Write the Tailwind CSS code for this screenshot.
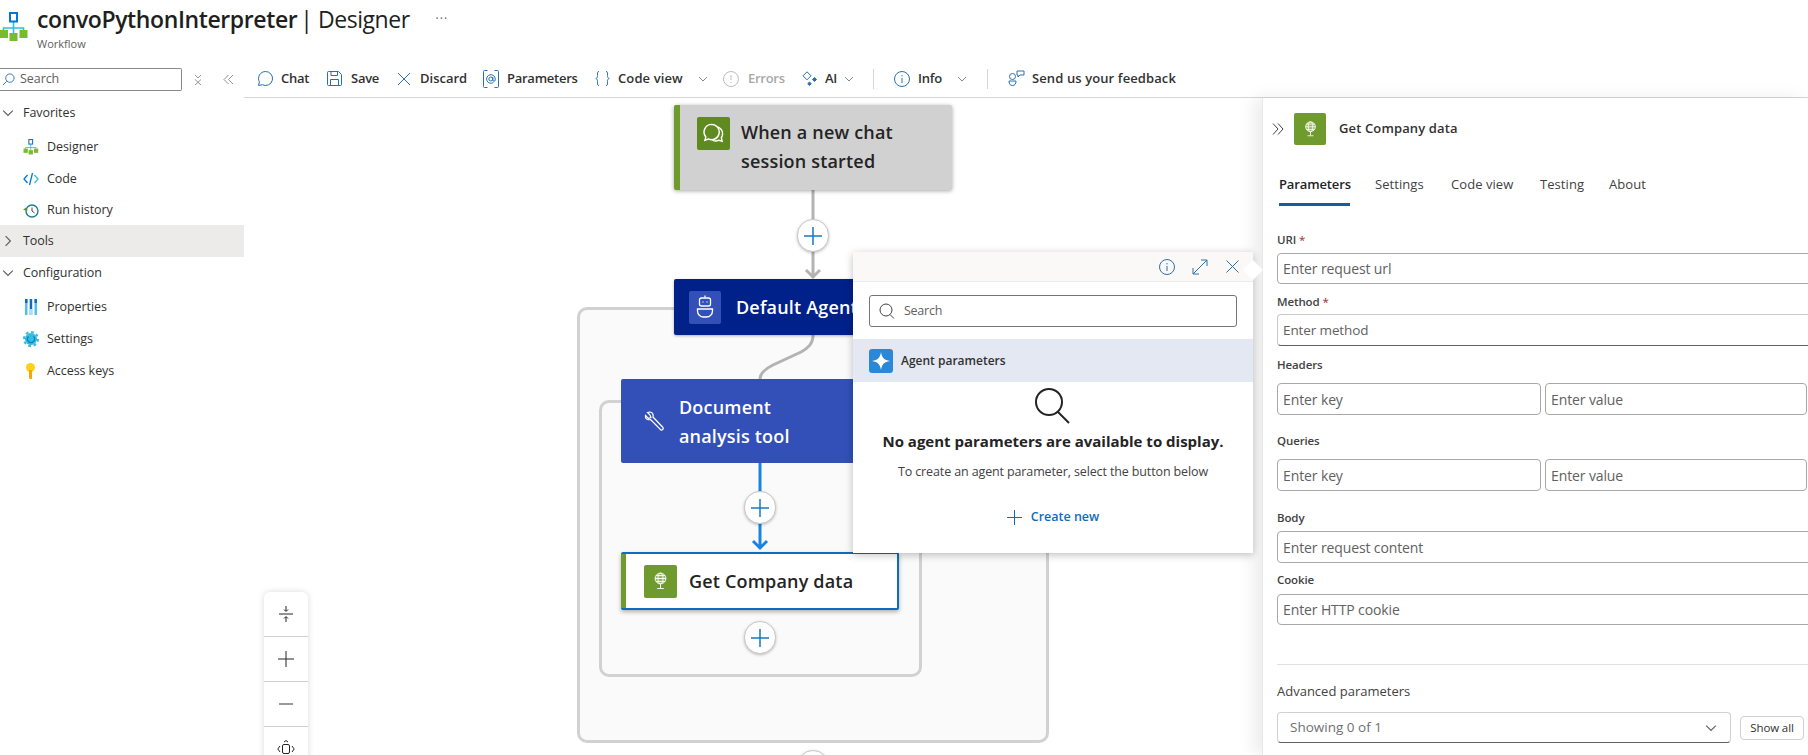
<!DOCTYPE html>
<html lang="en">
<head>
    <meta charset="UTF-8">
    <title>convoPythonInterpreter | Designer</title>
    <script src="https://cdn.jsdelivr.net/npm/@tailwindcss/browser@4"></script>
</head>
<body class="bg-white">
<svg class="hidden">
    <symbol id="flow" viewBox="0 0 28 30">
        <path d="M13.5 10v11M3.5 18v-2h20v2" fill="none" stroke="#32bedd" stroke-width="1.6"/>
        <rect x="10" y="1" width="7" height="8.5" fill="#fff" stroke="#0078d4" stroke-width="2"/>
        <rect x="0" y="18" width="8" height="8" fill="#76bc2d"/>
        <rect x="9.5" y="21" width="8" height="8" fill="#76bc2d"/>
        <rect x="19.5" y="18" width="8" height="8" fill="#76bc2d"/>
    </symbol>
    <symbol id="globe" viewBox="0 0 20 24" fill="none" stroke="#fff" stroke-width="1.1">
        <circle cx="10" cy="9" r="6.5" fill="#fff" fill-opacity=".25"/>
        <ellipse cx="10" cy="9" rx="3" ry="6.5"/>
        <path d="M3.5 9h13M4.5 5.5h11M4.5 12.5h11M10 15.5v5M6 21h8"/>
    </symbol>
    <symbol id="chev" viewBox="0 0 10 10" fill="none" stroke="currentColor" stroke-width="1">
        <path d="M1 3l4 4 4-4"/>
    </symbol>
</svg>

<div class="w-[1808px] h-[755px] overflow-hidden flex flex-col font-['Open_Sans',sans-serif] text-[#323130]">
    <!-- title -->
    <div class="h-[62px] shrink-0 flex">
        <svg class="w-[28px] h-[30px] mt-[12px]"><use href="#flow"/></svg>
        <div class="ml-[9px]">
            <div class="flex items-center h-[38px]">
                <span class="text-[23px] font-semibold tracking-[-0.017em] text-[#201f1e]">convoPythonInterpreter</span>
                <span class="text-[23px] tracking-[-0.02em] ml-[3px] text-[#201f1e]">| Designer</span>
                <span class="ml-[26px] text-[12px] tracking-[1px] text-[#605e5c]">···</span>
            </div>
            <div class="text-[11px] leading-[14px] mt-[-1px] text-[#605e5c]">Workflow</div>
        </div>
    </div>

    <div class="flex flex-1 min-h-0">
        <!-- left nav -->
        <div class="w-[244px] shrink-0 text-[12.5px] tracking-[-0.005em]">
            <div class="flex items-center h-[27px] mt-[4px]">
                <div class="w-[182px] h-[23px] border border-[#8a8886] rounded-r-[2px] border-l-0 flex items-center pl-[2px]">
                    <svg class="w-[13px] h-[13px] text-[#2a70b0]" viewBox="0 0 14 14" fill="none" stroke="currentColor"><circle cx="8.5" cy="5.5" r="4.5"/><path d="M5 9l-4 4"/></svg>
                    <span class="ml-[5px] text-[#605e5c]">Search</span>
                </div>
                <svg class="w-[10px] h-[12px] ml-[11px] text-[#8a8886]" viewBox="0 0 10 12" fill="none" stroke="currentColor" stroke-width=".9"><path d="M2 1l3 3 3-3M2 5.5l6 5.5M8 5.5l-6 5.5"/></svg>
                <svg class="w-[11px] h-[11px] ml-[20px] text-[#8a8886]" viewBox="0 0 11 11" fill="none" stroke="currentColor" stroke-width=".9"><path d="M5.5 1L1 5.5 5.5 10M10 1L5.5 5.5 10 10"/></svg>
            </div>
            <div class="flex items-center h-[32px] mt-[4px]">
                <svg class="w-[12px] h-[12px] ml-[2px] text-[#605e5c]"><use href="#chev"/></svg>
                <span class="ml-[9px]">Favorites</span>
            </div>
            <div class="flex items-center h-[32px] mt-[2px] pl-[23px]">
                <svg class="w-[16px] h-[16px]"><use href="#flow"/></svg>
                <span class="ml-[8px]">Designer</span>
            </div>
            <div class="flex items-center h-[32px] pl-[23px]">
                <svg class="w-[16px] h-[14px]" viewBox="0 0 16 14" fill="none" stroke-width="1.3"><path d="M4.5 3L1 7l3.5 4" stroke="#0078d4"/><path d="M11.5 3L15 7l-3.5 4" stroke="#32bedd"/><path d="M9.5 1L6.5 13" stroke="#0078d4"/></svg>
                <span class="ml-[8px]">Code</span>
            </div>
            <div class="flex items-center h-[31px] pl-[23px]">
                <svg class="w-[16px] h-[16px]" viewBox="0 0 16 16" fill="none"><circle cx="9" cy="8" r="6" stroke="#1f7f8f" stroke-width="1.4"/><path d="M9 4.5V8l2.5 2" stroke="#444" stroke-width="1"/><path d="M0 7l2.7-2.5L5 7.5z" fill="#5e9624"/></svg>
                <span class="ml-[8px]">Run history</span>
            </div>
            <div class="flex items-center h-[32px] mt-[-1px] bg-[#edebe9]">
                <svg class="w-[12px] h-[12px] ml-[2px] text-[#605e5c] -rotate-90"><use href="#chev"/></svg>
                <span class="ml-[9px]">Tools</span>
            </div>
            <div class="flex items-center h-[32px]">
                <svg class="w-[12px] h-[12px] ml-[2px] text-[#605e5c]"><use href="#chev"/></svg>
                <span class="ml-[9px]">Configuration</span>
            </div>
            <div class="flex items-center h-[32px] mt-[2px] pl-[24px]">
                <svg class="w-[14px] h-[16px]" viewBox="0 0 14 16"><path d="M1 0h2.5v16H1zM10.5 0H13v16h-2.5z" fill="#50c0e8"/><path d="M5.7 0h2.5v16H5.7z" fill="#0f6cbd"/><path d="M1 0h2.5v4H1zM10.5 0H13v4h-2.5z" fill="#0f6cbd"/><path d="M5.7 10h2.5v6H5.7z" fill="#a8e0f5"/></svg>
                <span class="ml-[9px]">Properties</span>
            </div>
            <div class="flex items-center h-[32px] pl-[23px]">
                <svg class="w-[16px] h-[16px]" viewBox="0 0 16 16" fill="none"><circle cx="8" cy="8" r="6" fill="#32bedd"/><circle cx="8" cy="8" r="6.9" stroke="#32bedd" stroke-width="2.2" stroke-dasharray="2.7 2.7"/><path d="M5.5 5.5a3.5 3.5 0 1 0 5 0" stroke="#0f7fd0" stroke-width="1.3"/></svg>
                <span class="ml-[8px]">Settings</span>
            </div>
            <div class="flex items-center h-[32px] pl-[24px]">
                <svg class="w-[13px] h-[16px]" viewBox="0 0 13 16"><circle cx="6.5" cy="4.5" r="4.5" fill="#fcd116"/><path d="M5 7h3v9H6l-1-1z" fill="#f6a800"/></svg>
                <span class="ml-[10px]">Access keys</span>
            </div>
        </div>

        <div class="flex-1 flex flex-col min-w-0">
            <!-- toolbar -->
            <div class="h-[36px] shrink-0 border-b border-[#d6d6d6] flex items-center pl-[13px] pb-[2px] text-[13px] font-semibold tracking-[-0.02em] text-[#323130]">
                <div class="w-[70px] flex items-center">
                    <svg class="w-[17px] h-[17px] text-[#2a70b0]" viewBox="0 0 17 17" fill="none" stroke="currentColor"><path d="M8.5 1.5a7 7 0 1 1-3.2 13.2L1.5 15.5l.9-3.6A7 7 0 0 1 8.5 1.5z"/></svg>
                    <span class="ml-[7px]">Chat</span>
                </div>
                <div class="w-[70px] flex items-center">
                    <svg class="w-[15px] h-[15px] text-[#2a70b0]" viewBox="0 0 15 15" fill="none" stroke="currentColor"><path d="M1.5.5h10l3 3v10a1 1 0 0 1-1 1h-12a1 1 0 0 1-1-1v-12a1 1 0 0 1 1-1z"/><path d="M4 .5v4h6.500v-4M3.5 14.5V8.500h8v6"/></svg>
                    <span class="ml-[9px]">Save</span>
                </div>
                <div class="w-[86px] flex items-center">
                    <svg class="w-[14px] h-[14px] text-[#2a70b0]" viewBox="0 0 14 14" fill="none" stroke="currentColor"><path d="M1 1l12 12M13 1L1 13"/></svg>
                    <span class="ml-[9px] tracking-[0em]">Discard</span>
                </div>
                <div class="w-[112px] flex items-center">
                    <svg class="w-[16px] h-[18px] text-[#2a70b0]" viewBox="0 0 16 18" fill="none" stroke="currentColor"><path d="M4.500 .5H1.500a1 1 0 0 0-1 1v15a1 1 0 0 0 1 1h3M11.500 .5h3a1 1 0 0 1 1 1v15a1 1 0 0 1-1 1h-3"/><circle cx="7.800" cy="9" r="2"/><path d="M9.800 7v3a1.200 1.200 0 0 0 2.400 0V9a4.300 4.300 0 1 0-1.800 3.500"/></svg>
                    <span class="ml-[8px]">Parameters</span>
                </div>
                <div class="w-[128px] flex items-center">
                    <svg class="w-[15px] h-[15px] text-[#2a70b0]" viewBox="0 0 15 15" fill="none" stroke="currentColor"><path d="M4 .5C2 .5 2.5 2.500 2.500 4.500S2 7 .8 7.500C2 8 2.500 8.500 2.500 10.500S2 14.500 4 14.500M11 .5c2 0 1.500 2 1.500 4S13 7 14.200 7.500C13 8 12.500 8.500 12.500 10.500s.5 4-1.500 4"/></svg>
                    <span class="ml-[8px] w-[80px] tracking-[0.008em]">Code view</span>
                    <svg class="w-[10px] h-[10px] text-[#8a8886]"><use href="#chev"/></svg>
                </div>
                <div class="w-[79px] flex items-center text-[#a8a8a8]">
                    <svg class="w-[16px] h-[16px]" viewBox="0 0 16 16" fill="none" stroke="#bdbdbd"><circle cx="8" cy="8" r="7.5"/><path d="M8 4v5M8 11v1.200"/></svg>
                    <span class="ml-[9px]">Errors</span>
                </div>
                <div class="w-[71px] flex items-center">
                    <svg class="w-[16px] h-[16px] text-[#2a70b0]" viewBox="0 0 16 16" fill="none" stroke="currentColor"><path d="M5 .8L9 4.800 5 8.800 1 4.800z"/><path d="M12.500 6.500l2 2-2 2-2-2z" fill="currentColor"/><path d="M7.500 11l1.800 1.800-1.800 1.800-1.800-1.800z" fill="currentColor"/></svg>
                    <span class="ml-[7px] w-[19px]">AI</span>
                    <svg class="w-[10px] h-[10px] text-[#8a8886]"><use href="#chev"/></svg>
                </div>
                <div class="w-[21px]"><div class="w-px h-[20px] bg-[#d6d6d6]"></div></div>
                <div class="w-[93px] flex items-center">
                    <svg class="w-[16px] h-[16px] text-[#2a70b0]" viewBox="0 0 16 16" fill="none" stroke="currentColor"><circle cx="8" cy="8" r="7.5"/><path d="M8 7v5M8 4v1.400"/></svg>
                    <span class="ml-[8px] w-[39px]">Info</span>
                    <svg class="w-[10px] h-[10px] text-[#8a8886]"><use href="#chev"/></svg>
                </div>
                <div class="w-[21px]"><div class="w-px h-[20px] bg-[#d6d6d6]"></div></div>
                <div class="flex items-center">
                    <svg class="w-[17px] h-[17px] text-[#2a70b0]" viewBox="0 0 17 17" fill="none" stroke="currentColor"><circle cx="4.5" cy="6.5" r="3"/><path d="M1 11h7a3.500 4.500 0 0 1-7 0zM9 1h7v4h-4l-2 2V5H9z"/></svg>
                    <span class="ml-[7px] whitespace-nowrap tracking-[0.008em]">Send us your feedback</span>
                </div>
            </div>

            <div class="flex-1 flex min-h-0">
                <!-- designer canvas -->
                <div class="relative w-[1018px] shrink-0">
                    <div class="absolute left-[333px] top-[209px] w-[472px] h-[436px] border-[3px] border-[#d1d1d1] rounded-[10px] bg-[#fafafa]"></div>
                    <div class="absolute left-[355px] top-[302px] w-[323px] h-[277px] border-[3px] border-[#d1d1d1] rounded-[10px] bg-[#fafafa]"></div>

                    <svg class="absolute left-0 top-0 w-[1018px] h-[700px]" viewBox="0 0 1018 700" fill="none">
                        <path d="M569 92v88M562 172l7 7 7-7" stroke="#b3b3b3" stroke-width="3"/>
                        <path d="M569 237c0 9-5 13-12 17l-28 13c-8 4-13 8-13 14" stroke="#b3b3b3" stroke-width="3"/>
                        <path d="M516 365v86M509 443l7 7 7-7" stroke="#1b84e0" stroke-width="3"/>
                    </svg>

                    <div class="absolute left-[430px] top-[7px] w-[278px] h-[85px] bg-[#d1d1d1] border-l-[6px] border-[#6f9a2d] rounded-[2px] shadow-[0_1px_4px_rgba(0,0,0,.35)] flex pl-[17px] pt-[12px]">
                        <div class="w-[33px] h-[33px] bg-[#5f8a1f] rounded-[2px] flex items-center justify-center shrink-0">
                            <svg class="w-[23px] h-[23px]" viewBox="0 0 24 24" fill="none" stroke="#fff" stroke-width="1.5"><path d="M10 2.5a8 8 0 1 1-3.500 15.200L3 19l1-3.400A8 8 0 0 1 10 2.500z"/><path d="M16.500 5c3 1.400 5 3.800 5 7.200 0 1.700-.5 3-1.300 4.200L21 20l-3.400-1c-1 .5-2 .8-3.100.8-1.300 0-2.500-.4-3.500-1"/></svg>
                        </div>
                        <div class="ml-[11px] mt-[1px] text-[18px] leading-[29px] font-semibold tracking-[0.01em] text-[#242424]">When a new chat<br>session started</div>
                    </div>

                    <div class="absolute left-[430px] top-[181px] w-[278px] h-[56px] bg-[#00208a] rounded-[2px] shadow-[0_1px_3px_rgba(0,0,0,.3)] flex items-center pl-[15px]">
                        <div class="w-[32px] h-[33px] bg-[#3350b8] rounded-[2px] flex items-center justify-center">
                            <svg class="w-[20px] h-[24px]" viewBox="0 0 20 24" fill="none" stroke="#fff" stroke-width="1.3"><path d="M10 .5v2"/><rect x="4.5" y="3" width="11" height="8" rx="2"/><path d="M8 6.500v1M12 6.500v1"/><path d="M2.500 14h15v2a6 6 0 0 1-6 6h-3a6 6 0 0 1-6-6z"/></svg>
                        </div>
                        <span class="ml-[15px] text-[18px] font-semibold tracking-[0.01em] text-white whitespace-nowrap">Default Agent</span>
                    </div>

                    <div class="absolute left-[377px] top-[281px] w-[278px] h-[84px] bg-[#3350b8] rounded-[2px] flex items-center pl-[23px]">
                        <svg class="w-[21px] h-[21px]" viewBox="0 0 21 21" fill="none" stroke="#fff" stroke-width="1.2"><path d="M1.500 4.500l3 3 2.500-1-1-2.500L3.500 1.500c2.500-1 5-.3 5.500 2 .2 1 .2 1.800 0 2.500l10 10.500c1 1.300-1 3.300-2.300 2.200L6.500 8.500c-1 .3-2.200.3-3 0-1.500-.7-2.300-2.200-2-4z"/></svg>
                        <div class="ml-[14px] pt-[2px] text-[18px] leading-[29px] font-semibold tracking-[0.01em] text-white">Document<br>analysis tool</div>
                    </div>

                    <div class="absolute left-[377px] top-[454px] w-[278px] h-[58px] bg-white border-2 border-[#0f6cbd] rounded-[2px] shadow-[0_2px_4px_rgba(0,0,0,.3)] flex items-center">
                        <div class="w-[5px] h-full bg-[#6f9a2d] -ml-[2px]"></div>
                        <div class="ml-[18px] w-[33px] h-[33px] bg-[#6f9a2d] rounded-[2px] flex items-center justify-center">
                            <svg class="w-[17px] h-[20px]"><use href="#globe"/></svg>
                        </div>
                        <span class="ml-[12px] text-[18px] font-semibold tracking-[0.01em] text-[#242424]">Get Company data</span>
                    </div>

                    <!-- add buttons -->
                    <button class="absolute left-[553px] top-[121px] w-[32px] h-[33px] rounded-full bg-white border border-[#c8c8c8] shadow-[0_1px_3px_rgba(0,0,0,.25)] flex items-center justify-center"><svg class="w-[20px] h-[20px]" viewBox="0 0 20 20" stroke="#1779c4" stroke-width="1.5"><path d="M10 1v18M1 10h18"/></svg></button>
                    <button class="absolute left-[500px] top-[393px] w-[32px] h-[33px] rounded-full bg-white border border-[#c8c8c8] shadow-[0_1px_3px_rgba(0,0,0,.25)] flex items-center justify-center"><svg class="w-[20px] h-[20px]" viewBox="0 0 20 20" stroke="#1779c4" stroke-width="1.5"><path d="M10 1v18M1 10h18"/></svg></button>
                    <button class="absolute left-[500px] top-[523px] w-[32px] h-[33px] rounded-full bg-white border border-[#c8c8c8] shadow-[0_1px_3px_rgba(0,0,0,.25)] flex items-center justify-center"><svg class="w-[20px] h-[20px]" viewBox="0 0 20 20" stroke="#1779c4" stroke-width="1.5"><path d="M10 1v18M1 10h18"/></svg></button>
                    <button class="absolute left-[553px] top-[652px] w-[32px] h-[33px] rounded-full bg-white border border-[#c8c8c8] shadow-[0_1px_3px_rgba(0,0,0,.25)]"></button>

                    <!-- zoom controls -->
                    <div class="absolute left-[20px] top-[494px] w-[44px] h-[180px] bg-white rounded-[6px] shadow-[0_0_6px_rgba(0,0,0,.15)] flex flex-col">
                        <div class="h-[45px] border-b border-[#d1d1d1] flex items-center justify-center">
                            <svg class="w-[14px] h-[16px]" viewBox="0 0 14 16" fill="none" stroke="#242424"><path d="M0 8h14M7 0v5M5 3.5L7 5.5l2-2M7 16v-5M5 12.5l2-2 2 2"/></svg>
                        </div>
                        <div class="h-[45px] border-b border-[#d1d1d1] flex items-center justify-center">
                            <svg class="w-[16px] h-[16px]" viewBox="0 0 16 16" stroke="#242424"><path d="M8 0v16M0 8h16"/></svg>
                        </div>
                        <div class="h-[45px] border-b border-[#d1d1d1] flex items-center justify-center">
                            <div class="w-[14px] h-[2px] bg-[#9a9a9a]"></div>
                        </div>
                        <div class="h-[45px] flex justify-center pt-[13px]">
                            <svg class="w-[18px] h-[16px]" viewBox="0 0 18 16" fill="none" stroke="#242424"><rect x="5.5" y="4.5" width="7" height="9" rx="1.5"/><path d="M7 2l2-1.500L11 2M3 6L.8 9 3 12M15 6l2.200 3L15 12"/></svg>
                        </div>
                    </div>

                    <!-- agent parameters popup -->
                    <div class="absolute left-[609px] top-[154px] w-[400px] h-[301px] bg-white shadow-[0_2px_8px_rgba(0,0,0,.25)] z-20 flex flex-col">
                        <div class="absolute right-[-7px] top-[11px] w-[14px] h-[14px] bg-white rotate-45"></div>
                        <div class="h-[30px] shrink-0 bg-[#faf9f8] border-b border-[#edebe9] flex items-center justify-end pr-[14px] text-[#2a70b0]">
                            <svg class="w-[16px] h-[16px]" viewBox="0 0 16 16" fill="none" stroke="currentColor"><circle cx="8" cy="8" r="7.5"/><path d="M8 7v5M8 4v1.400"/></svg>
                            <svg class="w-[16px] h-[16px] ml-[17px]" viewBox="0 0 16 16" fill="none" stroke="currentColor"><path d="M1 15L15 1M9 1h6v6M1 9v6h6"/></svg>
                            <svg class="w-[13px] h-[13px] ml-[18px]" viewBox="0 0 13 13" fill="none" stroke="currentColor"><path d="M.5.5l12 12M12.5.5l-12 12"/></svg>
                        </div>
                        <div class="mt-[13px] mx-[16px] h-[32px] shrink-0 border border-[#757575] rounded-[3px] flex items-center pl-[9px]">
                            <svg class="w-[16px] h-[16px] text-[#424242]" viewBox="0 0 16 16" fill="none" stroke="currentColor"><circle cx="7" cy="7" r="6"/><path d="M11 11.5l4 4"/></svg>
                            <span class="ml-[9px] text-[12.5px] text-[#616161] tracking-[-0.02em]">Search</span>
                        </div>
                        <div class="mt-[12px] h-[43px] shrink-0 bg-[#e3e8f3] flex items-center pl-[16px]">
                            <div class="w-[24px] h-[24px] rounded-[3px] bg-[#2b88d8] flex items-center justify-center">
                                <svg class="w-[18px] h-[18px]" viewBox="0 0 18 18"><path d="M9 0c.8 5.5 3 8 9 9-6 1-8.200 3.500-9 9-.8-5.500-3-8-9-9 6-1 8.200-3.500 9-9z" fill="#fff"/></svg>
                            </div>
                            <span class="ml-[8px] text-[12px] tracking-[0em] font-semibold text-[#323130]">Agent parameters</span>
                        </div>
                        <svg class="w-[36px] h-[36px] mt-[6px] self-center shrink-0" viewBox="0 0 36 36" fill="none" stroke="#242424" stroke-width="2"><circle cx="14" cy="14" r="13"/><path d="M23 24l11 11"/></svg>
                        <div class="mt-[6px] text-center text-[15px] font-bold text-[#242424]">No agent parameters are available to display.</div>
                        <div class="mt-[10px] text-center text-[12.5px] tracking-[-0.01em] text-[#424242]">To create an agent parameter, select the button below</div>
                        <div class="mt-[27px] flex items-center justify-center text-[#0f6cbd] text-[12.5px] font-semibold">
                            <svg class="w-[15px] h-[15px]" viewBox="0 0 15 15" stroke="currentColor"><path d="M7.5 0v15M0 7.5h15"/></svg>
                            <span class="ml-[9px]">Create new</span>
                        </div>
                    </div>
                </div>

                <!-- action panel -->
                <div class="relative z-10 w-[546px] shrink-0 bg-white border-l border-[#e8e8e8] shadow-[-8px_0_16px_rgba(0,0,0,.08)] pl-[14px] overflow-hidden text-[11.5px] tracking-[-0.01em]">
                    <div class="flex items-center mt-[15px] -ml-[5px] h-[32px]">
                        <svg class="w-[12px] h-[12px] text-[#424242]" viewBox="0 0 12 12" fill="none" stroke="currentColor"><path d="M1 .5L6 6l-5 5.500M6 .5L11 6l-5 5.500"/></svg>
                        <div class="ml-[10px] w-[32px] h-[32px] bg-[#6f9a2d] rounded-[2px] flex items-center justify-center">
                            <svg class="w-[15px] h-[18px]"><use href="#globe"/></svg>
                        </div>
                        <span class="ml-[13px] text-[13px] font-semibold tracking-[0.01em] text-[#323130]">Get Company data</span>
                    </div>
                    <div class="flex mt-[25px] ml-[2px] pt-[5px] text-[13px] tracking-[0.005em] text-[#424242] h-[36px]">
                        <div class="w-[71px] border-b-[3px] border-[#115ea3] font-semibold text-[#242424] text-center whitespace-nowrap tracking-[-0.01em]">Parameters</div>
                        <div class="ml-[25px] w-[50px]">Settings</div>
                        <div class="ml-[26px] w-[64px] whitespace-nowrap">Code view</div>
                        <div class="ml-[25px] w-[43px]">Testing</div>
                        <div class="ml-[26px]">About</div>
                    </div>

                    <div class="h-[18px] mt-[25px] leading-[18px] font-semibold text-[#424242]">URI <span class="font-normal text-[#a4262c]">*</span></div>
                    <input class="block mt-[4px] w-[540px] h-[31px] px-[5px] border border-[#a8a8a8] rounded-[4px] text-[14px] placeholder:text-[#616161]" placeholder="Enter request url">
                    <div class="h-[18px] mt-[9px] leading-[18px] font-semibold text-[#424242]">Method <span class="font-normal text-[#a4262c]">*</span></div>
                    <input class="block mt-[3px] w-[540px] h-[32px] px-[5px] border border-[#c8c8c8] border-b-[#616161] rounded-[4px] text-[13.5px] placeholder:text-[#616161]" placeholder="Enter method">
                    <div class="h-[18px] mt-[10px] leading-[18px] font-semibold text-[#424242]">Headers</div>
                    <div class="flex gap-[4px] mt-[9px]">
                        <input class="w-[264px] h-[32px] px-[5px] border border-[#a8a8a8] rounded-[4px] text-[14px] placeholder:text-[#616161]" placeholder="Enter key">
                        <input class="w-[262px] h-[32px] px-[5px] border border-[#a8a8a8] rounded-[4px] text-[14px] placeholder:text-[#616161]" placeholder="Enter value">
                    </div>
                    <div class="h-[18px] mt-[17px] leading-[18px] font-semibold text-[#424242]">Queries</div>
                    <div class="flex gap-[4px] mt-[9px]">
                        <input class="w-[264px] h-[32px] px-[5px] border border-[#a8a8a8] rounded-[4px] text-[14px] placeholder:text-[#616161]" placeholder="Enter key">
                        <input class="w-[262px] h-[32px] px-[5px] border border-[#a8a8a8] rounded-[4px] text-[14px] placeholder:text-[#616161]" placeholder="Enter value">
                    </div>
                    <div class="h-[18px] mt-[18px] leading-[18px] font-semibold text-[#424242]">Body</div>
                    <input class="block mt-[4px] w-[540px] h-[32px] px-[5px] border border-[#a8a8a8] rounded-[4px] text-[14px] placeholder:text-[#616161]" placeholder="Enter request content">
                    <div class="h-[18px] mt-[8px] leading-[18px] font-semibold text-[#424242]">Cookie</div>
                    <input class="block mt-[5px] w-[540px] h-[31px] px-[5px] border border-[#a8a8a8] rounded-[4px] text-[14px] placeholder:text-[#616161]" placeholder="Enter HTTP cookie">
                    <div class="mt-[39px] h-px bg-[#e0e0e0]"></div>
                    <div class="mt-[16px] h-[20px] leading-[20px] text-[13px] tracking-[0em] text-[#424242]">Advanced parameters</div>
                    <div class="flex items-center mt-[11px]">
                        <div class="w-[454px] h-[31px] border border-[#d1d1d1] border-b-[#616161] rounded-[4px] flex items-center pl-[12px] text-[13.5px] tracking-[0em] text-[#707070]">
                            Showing 0 of 1
                            <svg class="ml-auto mr-[13px] w-[12px] h-[12px] text-[#616161]"><use href="#chev"/></svg>
                        </div>
                        <div class="ml-[9px] w-[64px] h-[24px] border border-[#d1d1d1] rounded-[4px] flex items-center justify-center text-[11.5px] text-[#323130]">Show all</div>
                    </div>
                </div>
            </div>
        </div>
    </div>
</div>
</body>
</html>
